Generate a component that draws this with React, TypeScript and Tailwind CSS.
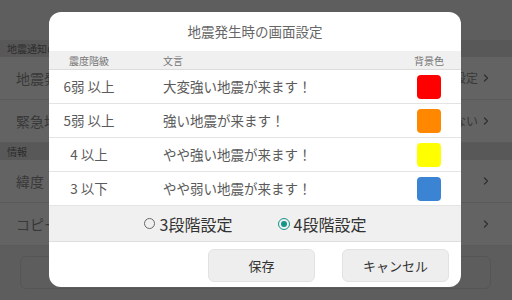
import { ChevronRight } from "lucide-react";

const FONT = { fontFamily: '"Noto Sans CJK JP", "Noto Sans", sans-serif' };

const levels = [
  { level: "6弱 以上", text: "大変強い地震が来ます！", color: "bg-[#ff0000]" },
  { level: "5弱 以上", text: "強い地震が来ます！", color: "bg-[#ff8800]" },
  { level: "4 以上", text: "やや強い地震が来ます！", color: "bg-[#ffff00]" },
  { level: "3 以下", text: "やや弱い地震が来ます！", color: "bg-[#3b84d4]" },
];

function BgSection({ label }: { label: string }) {
  return (
    <div className="h-[17px] bg-[#585858] flex items-center pl-[7px] text-[10px] text-[#2c2c2c]">
      <span className="w-[42px] overflow-hidden whitespace-nowrap">{label}</span>
    </div>
  );
}

function BgRow({ label, value }: { label: string; value?: string }) {
  return (
    <div className="h-[43px] bg-[#636363] border-b border-[#5a5a5a] flex items-center justify-between pl-[16px] pr-[20px]">
      <span className="w-[33px] overflow-hidden whitespace-nowrap text-[14px] text-[#383838]">
        {label}
      </span>
      <div className="flex items-center gap-[2px] text-[12px] text-[#383838]">
        {value && <span>{value}</span>}
        <ChevronRight className="h-[12px] w-[12px] text-[#303030]" strokeWidth={2.5} />
      </div>
    </div>
  );
}

export default function App() {
  return (
    <div className="relative w-[512px] h-[300px] overflow-hidden bg-[#5e5e5e]" style={FONT}>
      {/* dimmed settings screen behind the dialog */}
      <div className="flex flex-col h-full">
        <div className="h-[40px] bg-[#5e5e5e]" />
        <BgSection label="地震通知の設定" />
        <BgRow label="地震発生時の画面設定" value="設定" />
        <BgRow label="緊急地震速報を表示" value="ない" />
        <BgSection label="情報" />
        <BgRow label="緯度・経度" />
        <BgRow label="コピーライト" />
        <div className="flex-1 bg-[#5d5d5d] pt-[10px] pl-[20px]">
          <div className="w-[471px] h-[33px] rounded-[6px] border border-[#555555]" />
        </div>
      </div>

      {/* dialog */}
      <div className="absolute left-[49px] top-[12px] w-[412px] h-[275px] bg-white rounded-[12px] flex flex-col overflow-hidden">
        <div className="h-[39px] flex items-center justify-center text-[13.5px] text-[#666666]">
          地震発生時の画面設定
        </div>
        <div className="h-[19px] bg-[#f0f0f0] border-b border-[#dcdcdc] flex items-center text-[10px] text-[#777777]">
          <div className="w-[80px] text-center">震度階級</div>
          <div className="flex-1 pl-[34px]">文言</div>
          <div className="w-[48px] mr-[8px] text-center">背景色</div>
        </div>
        {levels.map((l) => (
          <div
            key={l.level}
            className="h-[34px] border-b border-[#e4e4e4] flex items-center text-[13.5px] text-[#5a5a5a]"
          >
            <div className="w-[80px] text-center">{l.level}</div>
            <div className="flex-1 pl-[34px]">{l.text}</div>
            <div className="w-[48px] mr-[8px] flex justify-center">
              <div className={`w-[24px] h-[24px] rounded-[4px] ${l.color}`} />
            </div>
          </div>
        ))}
        <div className="h-[36px] bg-[#f0f0f0] border-b border-[#dedede] flex items-center justify-center gap-[45px] text-[16px] text-[#333333]">
          <div className="flex items-center gap-[5px]">
            <span className="w-[11px] h-[11px] rounded-full border-[1.5px] border-[#666666]" />
            <span>3段階設定</span>
          </div>
          <div className="flex items-center gap-[4px]">
            <span className="w-[12px] h-[12px] rounded-full border-[1.5px] border-[#179488] flex items-center justify-center">
              <span className="w-[6px] h-[6px] rounded-full bg-[#179488]" />
            </span>
            <span>4段階設定</span>
          </div>
        </div>
        <div className="flex-1 flex justify-end items-start gap-[27px] pt-[7px] pr-[12px]">
          <button className="w-[107px] h-[33px] rounded-[6px] bg-[#eeeeee] border border-[#e2e2e2] text-[13px] text-[#333333]">
            保存
          </button>
          <button className="w-[107px] h-[33px] rounded-[6px] bg-[#eeeeee] border border-[#e2e2e2] text-[13px] text-[#333333]">
            キャンセル
          </button>
        </div>
      </div>
    </div>
  );
}
